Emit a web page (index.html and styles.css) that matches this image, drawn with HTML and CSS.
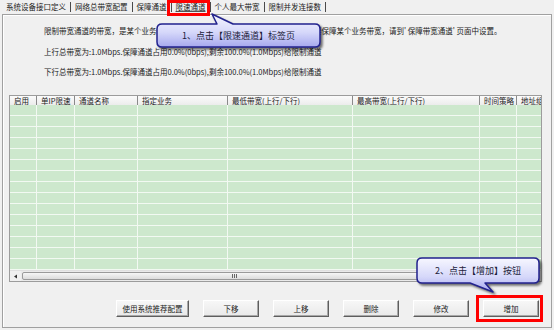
FILE: index.html
```html
<!DOCTYPE html>
<html lang="zh-CN">
<head>
<meta charset="utf-8">
<link rel="stylesheet" href="styles.css">
</head>
<body>
<div class="window">
  <div class="tabs">
    <span class="tab">系统设备接口定义</span>
    <span class="tab">网络总带宽配置</span>
    <span class="tab">保障通道</span>
    <span class="tab active">限速通道</span>
    <span class="tab">个人最大带宽</span>
    <span class="tab">限制并发连接数</span>
  </div>
  <div class="panel">
    <p class="desc first">限制带宽通道的带宽，是某个业务的最大可用带宽，不能保证该业务的带宽，如果要保障某个业务带宽，请到' 保障带宽通道' 页面中设置。</p>
    <p class="desc">上行总带宽为:1.0Mbps.保障通道占用0.0%(0bps),剩余100.0%(1.0Mbps)给限制通道</p>
    <p class="desc">下行总带宽为:1.0Mbps.保障通道占用0.0%(0bps),剩余100.0%(1.0Mbps)给限制通道</p>
    <div class="list">
      <div class="row head">
        <span>启用</span><span>单IP限速</span><span>通道名称</span><span>指定业务</span><span>最低带宽(上行/下行)</span><span>最高带宽(上行/下行)</span><span>时间策略</span><span>地址组</span>
      </div>
      <div class="rows">
        <div class="row"><span></span><span></span><span></span><span></span><span></span><span></span><span></span><span></span></div>
        <div class="row"><span></span><span></span><span></span><span></span><span></span><span></span><span></span><span></span></div>
        <div class="row"><span></span><span></span><span></span><span></span><span></span><span></span><span></span><span></span></div>
        <div class="row"><span></span><span></span><span></span><span></span><span></span><span></span><span></span><span></span></div>
        <div class="row"><span></span><span></span><span></span><span></span><span></span><span></span><span></span><span></span></div>
        <div class="row"><span></span><span></span><span></span><span></span><span></span><span></span><span></span><span></span></div>
        <div class="row"><span></span><span></span><span></span><span></span><span></span><span></span><span></span><span></span></div>
        <div class="row"><span></span><span></span><span></span><span></span><span></span><span></span><span></span><span></span></div>
        <div class="row"><span></span><span></span><span></span><span></span><span></span><span></span><span></span><span></span></div>
        <div class="row"><span></span><span></span><span></span><span></span><span></span><span></span><span></span><span></span></div>
        <div class="row"><span></span><span></span><span></span><span></span><span></span><span></span><span></span><span></span></div>
        <div class="row"><span></span><span></span><span></span><span></span><span></span><span></span><span></span><span></span></div>
        <div class="row"><span></span><span></span><span></span><span></span><span></span><span></span><span></span><span></span></div>
        <div class="row"><span></span><span></span><span></span><span></span><span></span><span></span><span></span><span></span></div>
        <div class="row"><span></span><span></span><span></span><span></span><span></span><span></span><span></span><span></span></div>
      </div>
      <div class="hscroll">
        <span class="sb-btn"><svg width="5" height="5" viewBox="0 0 5 5"><path d="M1 2.5 L4 0.5 V4.5 Z" fill="#333"/></svg></span>
        <span class="sb-thumb"><span class="grip"></span></span>
        <span class="sb-track"></span>
        <span class="sb-btn"><svg width="5" height="5" viewBox="0 0 5 5"><path d="M4 2.5 L1 0.5 V4.5 Z" fill="#333"/></svg></span>
      </div>
    </div>
    <div class="buttons">
      <button class="btn wide">使用系统推荐配置</button>
      <button class="btn">下移</button>
      <button class="btn">上移</button>
      <button class="btn">删除</button>
      <button class="btn">修改</button>
      <button class="btn">增加</button>
    </div>
  </div>

  <div class="mark mark-tab"></div>
  <div class="mark mark-add"></div>

  <div class="callout c1">
    <svg class="bubble" width="163" height="23" viewBox="0 0 163 23">
      <defs>
        <linearGradient id="g1" x1="0" y1="0" x2="0" y2="1">
          <stop offset="0" stop-color="#f7f7ff"/>
          <stop offset="0.55" stop-color="#d6d8fa"/>
          <stop offset="1" stop-color="#a6a8ee"/>
        </linearGradient>
      </defs>
      <path d="M5 0 H60 L55 -10 L76 0 H158 Q163 0 163 5 V18 Q163 23 158 23 H5 Q0 23 0 18 V5 Q0 0 5 0 Z" fill="url(#g1)" stroke="#22228e" stroke-width="1.5" stroke-linejoin="round"/>
    </svg>
    <span class="ctext">1、点击【限速通道】标签页</span>
  </div>

  <div class="callout c2">
    <svg class="bubble" width="122" height="25" viewBox="0 0 122 25">
      <defs>
        <linearGradient id="g2" x1="0" y1="0" x2="0" y2="1">
          <stop offset="0" stop-color="#f7f7ff"/>
          <stop offset="0.55" stop-color="#d6d8fa"/>
          <stop offset="1" stop-color="#a6a8ee"/>
        </linearGradient>
      </defs>
      <path d="M5 0 H117 Q122 0 122 5 V20 Q122 25 117 25 H68 L76 34 L53 25 H5 Q0 25 0 20 V5 Q0 0 5 0 Z" fill="url(#g2)" stroke="#22228e" stroke-width="1.5" stroke-linejoin="round"/>
    </svg>
    <span class="ctext">2、点击【增加】按钮</span>
  </div>
</div>
</body>
</html>
```

FILE: styles.css
```css
* { box-sizing: border-box; }

html, body {
  margin: 0;
  padding: 0;
  background: #f0f0f0;
}

body {
  font-family: "Noto Sans CJK SC", "Liberation Sans", sans-serif;
  font-size: 7.5px;
  color: #1a1a1a;
}

.window {
  position: relative;
  width: 554px;
  height: 330px;
  overflow: hidden;
}

/* tab strip */
.tabs {
  display: flex;
  align-items: center;
  height: 14px;
  padding-left: 6px;
}

.tab {
  line-height: 10px;
  padding-right: 4px;
  margin-right: 4px;
  border-right: 1px solid #4a4a4a;
  white-space: nowrap;
}

.tab.active {
  text-decoration: underline;
  text-decoration-color: #555;
}

/* panel */
.panel {
  margin-left: 2px;
  width: 550px;
  height: 314px;
  border: 1px solid #a0a0a0;
  box-shadow: inset 1px 1px 0 #ffffff;
  padding-top: 11px;
}

.desc {
  margin: 0 0 0 41px;
  line-height: 10px;
  height: 10px;
  white-space: nowrap;
}

.desc + .desc { margin-top: 11px; }
.desc + .desc + .desc { margin-top: 10px; }

/* list */
.list {
  margin: 18px 0 0 6px;
  width: 533px;
  border: 1px solid #9c9c9c;
  overflow: hidden;
}

.row {
  display: grid;
  grid-template-columns: 27px 38px 63px 90px 125px 127px 37px 24px;
  height: 11px;
}

.row > span {
  border-right: 1px solid #f2f9f2;
  border-bottom: 1px solid #f2f9f2;
  background: #cde8cd;
  overflow: hidden;
  white-space: nowrap;
}

.row.head {
  height: 9px;
}

.row.head > span {
  background: linear-gradient(#fbfbfb, #ececec);
  border-right: 1px solid #8a8a8a;
  border-bottom: none;
  line-height: 9px;
  padding-left: 4px;
  color: #222;
}

.row.head > span:last-child { border-right: none; }
.row > span:last-child { border-right: none; }

/* horizontal scrollbar */
.hscroll {
  display: flex;
  height: 11px;
  background: #eaeaea;
  border-top: 1px solid #e0e0e0;
}

.sb-btn {
  width: 11px;
  display: flex;
  align-items: center;
  justify-content: center;
  background: #f0f0f0;
}

.sb-thumb {
  width: 425px;
  margin: 1px 0 1px 1px;
  border: 1px solid #9a9a9a;
  border-radius: 2px;
  background: linear-gradient(#f6f6f6, #dcdcdc);
  display: flex;
  align-items: center;
  justify-content: center;
}

.grip {
  width: 5px;
  height: 4px;
  background: repeating-linear-gradient(90deg, #666 0 1px, transparent 1px 2px);
}

.sb-track { flex: 1; }

/* buttons */
.buttons {
  display: flex;
  justify-content: flex-end;
  gap: 14px;
  margin-top: 18px;
  padding-right: 12px;
}

.btn {
  width: 56px;
  height: 17px;
  padding: 0;
  font-family: "Noto Sans CJK SC", sans-serif;
  font-size: 7.5px;
  color: #1a1a1a;
  background: linear-gradient(#f7f7f7, #e9e9e9);
  border: 1px solid;
  border-color: #ffffff #5e5e5e #5e5e5e #ffffff;
  box-shadow: inset -1px -1px 0 #a8a8a8;
  border-radius: 0;
}

.btn.wide { width: 73px; }

/* red highlight marks */
.mark {
  position: absolute;
  border: 3px solid #ff0000;
}

.mark-tab {
  left: 167px;
  top: 0;
  width: 43px;
  height: 16px;
}

.mark-add {
  left: 476px;
  top: 295px;
  width: 67px;
  height: 27px;
}

/* callouts */
.callout {
  position: absolute;
  display: flex;
  align-items: center;
  justify-content: center;
}

.callout .bubble {
  position: absolute;
  left: 0;
  top: 0;
  overflow: visible;
  filter: drop-shadow(2px 2px 1px rgba(0, 0, 0, 0.55));
}

.ctext {
  position: relative;
  font-size: 9px;
  line-height: 10px;
  color: #1c1c3a;
  white-space: nowrap;
}

.c1 {
  left: 157px;
  top: 24px;
  width: 163px;
  height: 23px;
}

.c2 {
  left: 417px;
  top: 258px;
  width: 122px;
  height: 25px;
}
```
